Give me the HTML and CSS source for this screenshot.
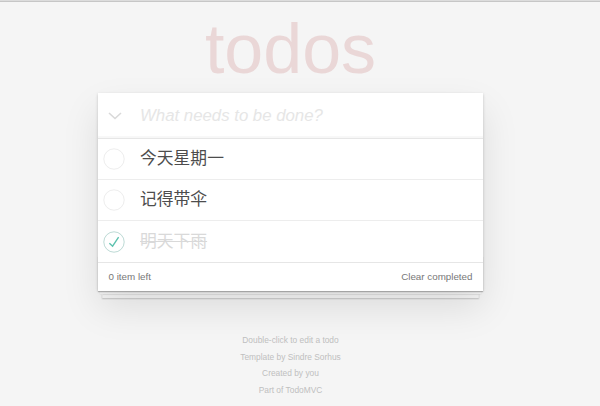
FILE: index.html
```html
<!DOCTYPE html>
<html lang="zh">
<head>
<meta charset="utf-8">
<title>TodoMVC</title>
<link rel="stylesheet" href="styles.css">
</head>
<body>
<div class="topline"></div>
<div class="page">
  <h1 class="title">todos</h1>
  <section class="todoapp">
    <header class="header">
      <svg class="toggle-all" width="14" height="8" viewBox="0 0 14 8"><polyline points="1,1 7,6.5 13,1" fill="none" stroke="#d9d9d9" stroke-width="1.6"/></svg>
      <input class="new-todo" placeholder="What needs to be done?">
    </header>
    <ul class="todo-list">
      <li class="todo">
        <svg class="toggle" width="22" height="22" viewBox="0 0 22 22"><circle cx="11" cy="11" r="10.2" fill="none" stroke="#ededed" stroke-width="1"/></svg>
        <span class="label">今天星期一</span>
      </li>
      <li class="todo">
        <svg class="toggle" width="22" height="22" viewBox="0 0 22 22"><circle cx="11" cy="11" r="10.2" fill="none" stroke="#ededed" stroke-width="1"/></svg>
        <span class="label">记得带伞</span>
      </li>
      <li class="todo completed">
        <svg class="toggle" width="22" height="22" viewBox="0 0 22 22"><circle cx="11" cy="11" r="10.2" fill="none" stroke="#bddad5" stroke-width="1"/><path d="M15.6 6.2 L9.6 15.2 L6.4 12.2" fill="none" stroke="#5dc2af" stroke-width="1.4"/></svg>
        <span class="label">明天下雨</span>
      </li>
    </ul>
    <footer class="footer">
      <span class="count">0 item left</span>
      <span class="clear">Clear completed</span>
    </footer>
  </section>
  <footer class="info">
    <p>Double-click to edit a todo</p>
    <p>Template by Sindre Sorhus</p>
    <p>Created by you</p>
    <p>Part of TodoMVC</p>
  </footer>
</div>
</body>
</html>
```
FILE: styles.css
```css
html, body {
  margin: 0;
  padding: 0;
}
body {
  background: #f5f5f5;
  font-family: "Liberation Sans", Arial, "Noto Sans CJK SC", sans-serif;
  color: #4d4d4d;
  width: 600px;
  height: 406px;
  overflow: hidden;
}
.topline {
  height: 1px;
  border-top: 1px solid #dcdcdc;
  background: #c6c6c6;
}
.page {
  width: 581px;
  display: flex;
  flex-direction: column;
  align-items: center;
}
.title {
  margin: 12px 0 0;
  font-size: 70px;
  line-height: 70px;
  height: 70px;
  font-weight: normal;
  color: rgba(175, 47, 47, 0.15);
  text-align: center;
}
.todoapp {
  margin-top: 9px;
  width: 385px;
  background: #fff;
  box-shadow: 0 1.4px 2.8px rgba(0, 0, 0, 0.2), 0 17px 35px rgba(0, 0, 0, 0.1);
  position: relative;
}
.header {
  height: 45px;
  display: flex;
  align-items: center;
  border-bottom: 1px solid #e6e6e6;
  box-shadow: inset 0 -2px 1px rgba(0, 0, 0, 0.03);
}
.toggle-all {
  margin-left: 10px;
  margin-top: 1px;
  flex: none;
}
.new-todo {
  margin-left: 18px;
  border: 0;
  outline: none;
  padding: 0;
  background: transparent;
  font-family: "Liberation Sans", Arial, sans-serif;
  font-size: 16.8px;
  flex: 1;
  color: #4d4d4d;
}
.new-todo::placeholder {
  font-style: italic;
  color: #e6e6e6;
}
.todo-list {
  list-style: none;
  margin: 0;
  padding: 0;
}
.todo {
  height: 40px;
  display: flex;
  align-items: center;
  border-bottom: 1px solid #ededed;
  font-size: 16.8px;
}
.todo:last-child {
  border-bottom: 0;
  height: 41px;
}
.toggle {
  margin-left: 5px;
  flex: none;
}
.label {
  margin-left: 15px;
  line-height: 20px;
  color: #4d4d4d;
  font-family: "Liberation Sans", "Noto Sans CJK SC", sans-serif;
}
.completed .label {
  color: #d9d9d9;
  text-decoration: line-through;
}
.footer {
  height: 14px;
  padding: 7px 10.5px;
  border-top: 1px solid #e6e6e6;
  color: #777;
  font-size: 9.8px;
  line-height: 14px;
  display: flex;
  justify-content: space-between;
  align-items: center;
  position: relative;
}
.footer::before {
  content: "";
  position: absolute;
  left: 0;
  right: 0;
  bottom: 0;
  height: 35px;
  overflow: hidden;
  z-index: -1;
  box-shadow: 0 1px 1px rgba(0, 0, 0, 0.2),
    0 5.6px 0 -2px #f6f6f6,
    0 6.3px 1px -2px rgba(0, 0, 0, 0.2),
    0 11.2px 0 -4.2px #f6f6f6,
    0 11.9px 1.4px -4.2px rgba(0, 0, 0, 0.2);
}
.info {
  margin-top: 41px;
  text-align: center;
  color: #bfbfbf;
  font-size: 8.4px;
}
.info p {
  margin: 0;
  line-height: 16.6px;
}
```
